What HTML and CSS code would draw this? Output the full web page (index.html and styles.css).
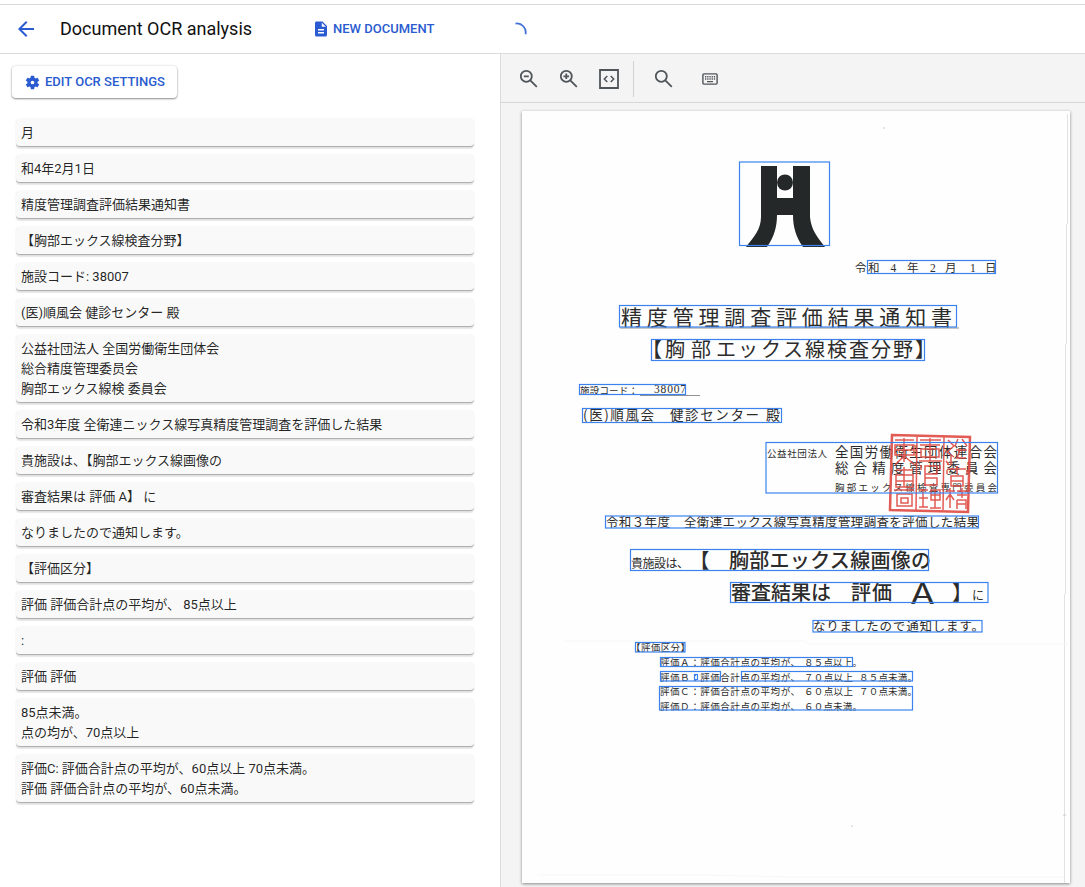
FILE: index.html
```html
<!DOCTYPE html>
<html lang="ja">
<head>
<meta charset="utf-8">
<title>Document OCR analysis</title>
<link rel="stylesheet" href="styles.css">
</head>
<body>
<header class="topbar">
  <svg class="back" viewBox="0 0 24 24"><path d="M20 11H7.83l5.59-5.59L12 4l-8 8 8 8 1.41-1.41L7.83 13H20v-2z"/></svg>
  <h1 class="title">Document OCR analysis</h1>
  <button class="new-doc"><svg viewBox="0 0 24 24"><path d="M14 2H6c-1.1 0-1.99.9-1.99 2L4 20c0 1.100.89 2 1.990 2H18c1.100 0 2-.9 2-2V8l-6-6zm2 16H8v-2h8v2zm0-4H8v-2h8v2zm-3-5V3.500L18.500 9H13z"/></svg>NEW DOCUMENT</button>
  <svg class="spinner" viewBox="0 0 14 14"><path d="M1.500 1.600A8.800 8.800 0 0 1 11.500 12.200"/></svg>
</header>
<main class="workspace">
  <section class="results">
    <button class="settings"><svg viewBox="0 0 24 24"><path d="M19.140 12.940c.04-.3.06-.61.06-.94s-.02-.64-.07-.94l2.030-1.580a.49.49 0 0 0 .12-.61l-1.920-3.320a.49.49 0 0 0-.59-.22l-2.390.96a7 7 0 0 0-1.620-.94l-.36-2.540a.48.48 0 0 0-.48-.41h-3.840a.47.47 0 0 0-.47.41l-.36 2.540c-.59.24-1.130.57-1.620.94l-2.390-.96a.48.48 0 0 0-.59.22L2.740 8.870a.48.48 0 0 0 .12.61l2.030 1.580c-.05.3-.09.63-.09.94s.02.64.07.94l-2.030 1.580a.49.49 0 0 0-.12.61l1.920 3.320c.12.22.37.29.59.22l2.390-.96c.5.38 1.030.7 1.620.94l.36 2.540c.05.24.24.41.48.41h3.840c.24 0 .44-.17.47-.41l.36-2.540c.59-.24 1.130-.56 1.620-.94l2.390.96c.22.08.47 0 .59-.22l1.920-3.320a.48.48 0 0 0-.12-.61l-2.010-1.580zM12 14.600a2.600 2.600 0 1 1 0-5.200 2.600 2.600 0 0 1 0 5.200z"/></svg>EDIT OCR SETTINGS</button>
    <div class="blocks">
      <div class="block">月</div>
      <div class="block">和4年2月1日</div>
      <div class="block">精度管理調査評価結果通知書</div>
      <div class="block">【胸部エックス線検査分野】</div>
      <div class="block">施設コード: 38007</div>
      <div class="block">(医)順風会 健診センター 殿</div>
      <div class="block">公益社団法人 全国労働衛生団体会<br>総合精度管理委员会<br>胸部エックス線検 委員会</div>
      <div class="block">令和3年度 全衛連ニックス線写真精度管理調査を評価した結果</div>
      <div class="block">貴施設は、【胸部エックス線画像の</div>
      <div class="block">審査結果は 評価 A】 に</div>
      <div class="block">なりましたので通知します。</div>
      <div class="block">【評価区分】</div>
      <div class="block">評価 評価合計点の平均が、 85点以上</div>
      <div class="block">:</div>
      <div class="block">評価 評価</div>
      <div class="block">85点未満。<br>点の均が、70点以上</div>
      <div class="block">評価C: 評価合計点の平均が、60点以上 70点未満。<br>評価 評価合計点の平均が、60点未満。</div>
    </div>
  </section>
  <section class="viewer">
    <div class="toolbar">
      <svg class="tool" viewBox="0 0 20 20"><circle cx="7.300" cy="7.300" r="5.500"/><path d="M11.300 11.300l6.500 6.500M4.800 7.300h5"/></svg>
      <svg class="tool" viewBox="0 0 20 20"><circle cx="7.300" cy="7.300" r="5.500"/><path d="M11.300 11.300l6.500 6.500M4.500 7.300h5.600M7.300 4.500v5.600"/></svg>
      <svg class="tool fit" viewBox="0 0 20 20"><path d="M1 1h18v18H1z"/><path class="thin" d="M8.300 7L5.300 10l3 3M11.700 7l3 3-3 3"/></svg>
      <span class="divider"></span>
      <svg class="tool search" viewBox="0 0 20 20"><circle cx="7.300" cy="7.300" r="5.500"/><path d="M11.300 11.300l6.500 6.500"/></svg>
      <svg class="keyboard" viewBox="0 0 16 12"><rect x=".9" y=".9" width="14.200" height="10.200" rx="1"/><path d="M3 3.700h1.300M5.200 3.700h1.300M7.400 3.700h1.300M9.600 3.700h1.300M11.800 3.700h1.300M3 6h1.300M5.200 6h1.300M7.400 6h1.300M9.600 6h1.300M11.800 6h1.300M5 8.600h6"/></svg>
    </div>
    <div class="canvas">
      <svg class="page" viewBox="522 111 548 772">
        <path class="fold" d="M1067.500 114v110M1066.500 224v120M1065.500 344v250M1064.500 594v290"/>
        <path class="faint" d="M565 641h240l5 3h258M538 875h170l80 2h275"/>
        <path class="speck" d="M884 127v2M1063 815h3M852 825v2"/>
        <g class="emblem">
          <path d="M761 166h16v32h16v-32h17v51c1 12 7 20 15 30h-22c-7-10-10-20-10-32h-16c0 12-3 22-10 32h-21c8-10 15-18 15-30z"/>
          <circle cx="785" cy="182.500" r="8"/>
        </g>
        <g class="print">
          <g font-size="11.500">
            <text x="855" y="272">令</text><text x="868" y="272">和</text><text class="num" x="890.500" y="271.500">4</text><text x="907" y="272">年</text><text class="num" x="930" y="271.500">2</text><text x="945" y="272">月</text><text class="num" x="970" y="271.500">1</text><text x="985" y="272">日</text>
          </g>
          <text x="621" y="325" font-size="21" textLength="331">精度管理調査評価結果通知書</text>
          <text x="642 665 691 716 738 761 783 805 827 849 871 893 915" y="357" font-size="20">【胸部エックス線検査分野】</text>
          <text x="580" y="394" font-size="9.500" textLength="58">施設コード：</text>
          <text class="num" x="654" y="393" font-size="11.500" textLength="32">38007</text>
          <text x="583" y="420" font-size="13.500" textLength="71">(医)順風会</text>
          <text x="670" y="420" font-size="13.500" textLength="89">健診センター</text>
          <text x="766" y="420" font-size="14">殿</text>
          <text x="767" y="457" font-size="9.500" textLength="60">公益社団法人</text>
          <text x="835" y="457" font-size="13.500" textLength="162">全国労働衛生団体連合会</text>
          <text x="835" y="473" font-size="13.500" textLength="162">総合精度管理委員会</text>
          <text x="835" y="491" font-size="9.500" textLength="162">胸部エックス線検査専門委員会</text>
          <text x="606" y="527" font-size="12.500" textLength="64">令和３年度</text>
          <text x="684" y="527" font-size="12.500" textLength="295">全衛連エックス線写真精度管理調査を評価した結果</text>
          <text x="631" y="567.500" font-size="12" textLength="58">貴施設は、</text>
          <g class="bold">
            <text x="689.500" y="568" font-size="20">【</text>
            <text x="729" y="568" font-size="20" textLength="202">胸部エックス線画像の</text>
            <text x="731" y="600" font-size="20" textLength="100">審査結果は</text>
            <text x="851" y="600" font-size="20" textLength="41">評価</text>
            <text x="952" y="600" font-size="20">】</text>
          </g>
          <text x="911" y="604" font-size="29" textLength="23" lengthAdjust="spacingAndGlyphs">A</text>
          <text x="972" y="600" font-size="12">に</text>
          <text x="813" y="631" font-size="12.500" textLength="171">なりましたので通知します。</text>
          <g font-size="9.500">
            <text x="631" y="651" textLength="59">【評価区分】</text>
            <text x="660" y="666" textLength="140">評価Ａ：評価合計点の平均が、</text>
            <text x="804" y="666" textLength="58">８５点以上。</text>
            <text x="660" y="680.500" textLength="140">評価Ｂ：評価合計点の平均が、</text>
            <text x="804" y="680.500" textLength="49">７０点以上</text>
            <text x="859" y="680.500" textLength="58">８５点未満。</text>
            <text x="660" y="695" textLength="140">評価Ｃ：評価合計点の平均が、</text>
            <text x="804" y="695" textLength="49">６０点以上</text>
            <text x="859" y="695" textLength="58">７０点未満。</text>
            <text x="660" y="709.500" textLength="140">評価Ｄ：評価合計点の平均が、</text>
            <text x="804" y="709.500" textLength="58">６０点未満。</text>
          </g>
          <path class="rule" d="M640 395.500h60M620 328h339"/>
        </g>
        <g class="seal">
          <path class="seal-frame" d="M892 435l78 2-2 75-78-2z"/>
          <path d="M917 437l-1 73M944 437l-1 73"/>
          <path d="M895 440h19M895 445h19v10h-19zM904 438v24M895 450h19M904 456l-9 9M904 456l11 9M896 470h17M896 475h17v12h-17zM896 481h17M904 467v20M894 490h20M897 494h15v12h-15zM901 498h7v5h-7z"/>
          <path d="M920 440h21M920 445h20M930 438v8M921 449h18v8h-18zM930 446v15M919 461h23M921 465v5M940 465v5M925 466h12v8h-12zM925 478h12v7h-12zM925 466v20M919 490h9M923 489v18M919 498h9M919 507h9M931 490h9v10h-9zM935 490v18M930 508h11M931 495h9"/>
          <path d="M948 440l6 6-7 6 7 5M951 456v9M946 461l3 4M958 439l-3 7M962 439l5 7M956 450h11M960 450l-3 8h9M948 469h18M957 466v8M947 474v-4M967 474v-4M951 476h12v10h-12zM951 481h12M946 491h9M950 488v20M946 500l4-6 4 6M957 491h10M957 495h10M962 488v10M957 500h9v9M957 500v9M957 504h9"/>
        </g>
        <g class="boxes">
          <rect x="739.500" y="162" width="90" height="83.500"/>
          <rect x="867.500" y="260.500" width="128" height="13"/>
          <rect x="619.500" y="305.500" width="337" height="21.500"/>
          <rect x="651.500" y="339.500" width="273" height="21"/>
          <rect x="579.500" y="384.500" width="106" height="10"/>
          <rect x="582.500" y="408.500" width="199" height="14"/>
          <rect x="766" y="442.500" width="231.500" height="50.500"/>
          <rect x="605.500" y="516" width="373" height="12"/>
          <rect x="630.500" y="549.500" width="298" height="21"/>
          <rect x="730.500" y="582.500" width="257.500" height="20"/>
          <rect x="813" y="620.500" width="169" height="11.500"/>
          <rect x="635.500" y="642.500" width="49.500" height="9.500"/>
          <rect x="660.500" y="657.500" width="192" height="9"/>
          <rect x="660.500" y="671.500" width="60" height="9.500"/>
          <rect x="694.500" y="674.500" width="3" height="5"/>
          <rect x="741.500" y="671.500" width="171" height="9.500"/>
          <rect x="659.500" y="686.500" width="253" height="23.500"/>
        </g>
      </svg>
    </div>
  </section>
</main>
</body>
</html>
```
FILE: styles.css
```css
* { box-sizing: border-box; }
body {
  margin: 0;
  height: 887px;
  padding-top: 4px;
  overflow: hidden;
  display: flex;
  flex-direction: column;
  background: #fff;
  color: rgba(0, 0, 0, .87);
  font: 13px/20px Roboto, "Noto Sans CJK JP", sans-serif;
}
button {
  display: flex;
  align-items: center;
  border: 0;
  padding: 0;
  background: none;
  color: #2a5bd0;
  font: 500 13px/20px Roboto, sans-serif;
}
button svg { fill: currentColor; }
.topbar {
  display: flex;
  align-items: center;
  height: 50px;
  flex: none;
  padding-left: 14px;
  border-top: 1px solid #d6d8da;
  border-bottom: 1px solid #dadce0;
}
.back { width: 24px; height: 24px; fill: #2a5bd0; }
.title { margin: 0; padding-left: 22px; width: 276px; font-size: 18px; font-weight: 400; line-height: 24px; color: #111; }
.new-doc { width: 200px; gap: 4px; letter-spacing: 0; }
.new-doc svg { width: 18px; height: 18px; margin-left: -2px; margin-right: -1px; }
.spinner { width: 14px; height: 14px; fill: none; stroke: #4372d8; stroke-width: 1.800; }
.workspace { display: flex; flex: 1; min-height: 0; }
.results { width: 500px; padding: 12px 26px 0 12px; }
.settings {
  width: 165px;
  height: 32px;
  padding-left: 12px;
  gap: 4px;
  border-radius: 4px;
  box-shadow: 0 1px 2px rgba(0, 0, 0, .42), 0 0 3px rgba(0, 0, 0, .12);
}
.settings svg { width: 17px; height: 17px; }
.blocks { display: flex; flex-direction: column; gap: 8px; padding: 21px 0 0 4px; }
.block {
  padding: 4px 5px;
  border-radius: 4px;
  background: #f9f9f9;
  background-clip: padding-box;
  border-bottom: 1px solid transparent;
  margin-bottom: -1px;
  box-shadow: inset 0 -1px 0 #b0b0b0, 0 1px 1px rgba(0, 0, 0, .07), 0 0 2px rgba(0, 0, 0, .08);
}
.viewer { flex: 1; display: flex; flex-direction: column; border-left: 1px solid #dadce0; background: #f4f4f4; }
.toolbar { display: flex; align-items: center; flex: none; height: 49px; padding: 1px 0 0 18px; border-bottom: 1px solid #d5d7d9; }
.tool { width: 20px; height: 20px; margin-right: 20px; fill: none; stroke: #50555a; stroke-width: 1.800; }
.tool.fit { margin-right: 14px; }
.thin { stroke-width: 1.500; }
.divider { width: 1px; height: 36px; margin-right: 20px; background: #d0d2d4; }
.tool.search { margin-right: 28px; }
.keyboard { width: 16px; height: 12px; fill: none; stroke: #50555a; stroke-width: 1.400; }
.canvas { flex: 1; min-height: 0; padding: 8px 0 0 21px; }
.page { display: block; width: 548px; height: 772px; background: #fefefe; box-shadow: 0 1px 3px rgba(0, 0, 0, .45); }
.fold { fill: none; stroke: #e2e2e2; stroke-width: 1; }
.faint { fill: none; stroke: #f6f6f6; }
.speck { stroke: #c8c8c8; }
.emblem { fill: #242829; }
.print { fill: #2c2c2c; font-family: "Noto Sans CJK JP", sans-serif; }
.print text { text-spacing-trim: space-all; }
.num { font-family: "Liberation Serif", serif; }
.bold { font-weight: 500; }
.rule { stroke: #777; stroke-width: .8; }
.seal { fill: none; stroke: #e04a42; stroke-width: 1.500; opacity: .9; }
.seal-frame { stroke-width: 2.500; }
.boxes { fill: none; stroke: #3b82ee; stroke-width: 1.200; }
```
